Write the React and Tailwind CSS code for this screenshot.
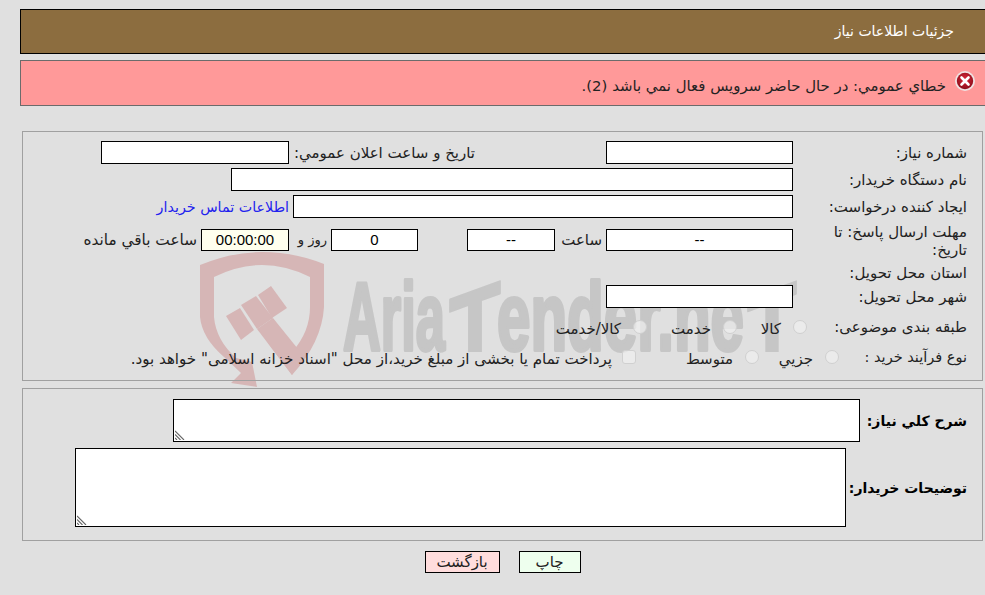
import React from "react";

const inputCls = "h-[23px] border border-black bg-white text-center text-[15px] font-['Liberation_Sans',sans-serif] text-black outline-none shrink-0";

function Label({ className = "", children }) {
  return <div className={"shrink-0 text-[15px] leading-[18px] text-[#222] " + className}>{children}</div>;
}

function Choice({ cell = "", type = "radio", gap = "mr-[12px]", textClass = "text-[15px]", children }) {
  return (
    <label className={"flex items-center shrink-0 " + cell}>
      <input
        type={type}
        disabled
        className={
          "appearance-none w-[14px] h-[14px] shrink-0 border border-[#d0d0d0] bg-[#f0f0f0]/70 " +
          (type === "radio" ? "rounded-full" : "rounded-[3px]")
        }
      />
      <span className={"mt-[3px] leading-[18px] text-[#222] whitespace-nowrap " + textClass + " " + gap}>{children}</span>
    </label>
  );
}

function Grip() {
  return (
    <svg className="absolute left-[2px] bottom-[2px] w-[10px] h-[10px]" viewBox="0 0 10 10" aria-hidden="true">
      <path d="M0 1 L9 10 M0 4.5 L5.5 10 M0 8 L2 10" stroke="#666" strokeWidth="1.1" fill="none" />
    </svg>
  );
}

function Note({ className }) {
  return (
    <div className="relative shrink-0">
      <textarea className={"block resize-none border border-black bg-white outline-none " + className} readOnly />
      <Grip />
    </div>
  );
}

function Watermark() {
  return (
    <svg
      className="absolute left-[190px] top-[240px] w-[620px] h-[155px] z-0"
      viewBox="190 240 620 155"
      dir="ltr"
      aria-hidden="true"
    >
      <defs>
        <clipPath id="base">
          <rect x="190" y="240" width="620" height="112" />
        </clipPath>
      </defs>
      <g fill="#d6b6b6">
        <path d="M200 265 Q232 252 262 252 Q294 252 324 264 L324 307 Q322 342 292 375 L268 343 L277 333 L292 352 Q310 332 310 307 L310 277 Q286 265 262 265 Q238 265 214 277 L214 317 Q216 340 236 358 L252 362 L257 387 L231 383 L241 373 L224 357 Q202 338 200 317 Z" />
        <path d="M226 316 L240 308 L254 330 L241 340 Z" />
        <path d="M241 305 L256 296 L273 318 L257 329 Z" />
        <path d="M258 295 L271 286 L287 308 L272 318 Z" />
        <path d="M257 329 L273 318 L302 354 L292 375 Z" />
      </g>
      <g fill="#c6c6c6" stroke="#c6c6c6" strokeWidth="4" strokeLinejoin="round" fontFamily="'Liberation Sans', sans-serif" fontWeight="700" fontSize="96" style={{ direction: "ltr" }}>
        <text x="343" y="350" textLength="102" lengthAdjust="spacingAndGlyphs">Aria</text>
        <text x="497" y="350" textLength="247" lengthAdjust="spacingAndGlyphs">ender.ne</text>
        <g clipPath="url(#base)" strokeWidth="2" fontSize="110">
          <text x="449" y="366" textLength="52" lengthAdjust="spacingAndGlyphs" transform="translate(475 282) skewY(-20) translate(-475 -282)">T</text>
          <text x="747" y="366" textLength="50" lengthAdjust="spacingAndGlyphs" transform="translate(772 282) skewY(-20) translate(-772 -282)">T</text>
        </g>
      </g>
    </svg>
  );
}

export default function App() {
  return (
    <div className="relative w-[985px] h-[595px] overflow-hidden bg-[#e0e0e0] pt-[9px] font-['DejaVu_Sans','Noto_Sans',sans-serif]" dir="rtl">
      <Watermark />
      <div className="relative z-10">
        <div className="ml-[20px] -mr-[2px] h-[45px] border border-black bg-[#8c6d3f] pr-[32px] flex items-center">
          <span className="text-[14px] text-white">جزئیات اطلاعات نیاز</span>
        </div>

        <div className="ml-[20px] -mr-[2px] mt-[6px] h-[46px] border border-[#6b6b6b] bg-[#ff9999] flex items-center pr-[10px]">
          <svg className="w-[22px] h-[22px] shrink-0 -mt-[5px]" viewBox="0 0 22 22" aria-hidden="true">
            <defs>
              <radialGradient id="er" cx="50%" cy="40%" r="60%">
                <stop offset="0%" stopColor="#e0283a" />
                <stop offset="100%" stopColor="#8a0f1c" />
              </radialGradient>
            </defs>
            <circle cx="11" cy="11" r="10" fill="#efe3e3" />
            <circle cx="11" cy="11" r="8.2" fill="url(#er)" />
            <path d="M7.5 7.5 L14.5 14.5 M14.5 7.5 L7.5 14.5" stroke="#fff" strokeWidth="2.6" strokeLinecap="round" />
          </svg>
          <span className="mr-[8px] mt-[6px] text-[14.9px] text-[#222] whitespace-nowrap">خطاي عمومي: در حال حاضر سرويس فعال نمي باشد (2).</span>
        </div>

        <fieldset className="ml-[22px] mr-[2px] mt-[25px] h-[250px] border border-[#a0a0a0] pr-[15px] pt-[9px]">
          <div className="flex items-center">
            <Label className="w-[174px]">شماره نیاز:</Label>
            <input className={inputCls + " w-[187px]"} readOnly />
            <Label className="w-[186px] mr-[131px]">تاریخ و ساعت اعلان عمومي:</Label>
            <input className={inputCls + " w-[188px]"} readOnly />
          </div>
          <div className="flex items-center mt-[4px]">
            <Label className="w-[174px]">نام دستگاه خریدار:</Label>
            <input className={inputCls + " w-[562px]"} readOnly />
          </div>
          <div className="flex items-center mt-[4px]">
            <Label className="w-[174px]">ایجاد کننده درخواست:</Label>
            <input className={inputCls + " w-[500px]"} readOnly />
            <a className="mr-[4px] text-[14.3px] leading-[18px] text-[#2222ee] whitespace-nowrap">اطلاعات تماس خریدار</a>
          </div>
          <div className="flex items-start mt-[11px] h-[36px]">
            <Label className="w-[174px] pl-[20px] -mt-[6px]">مهلت ارسال پاسخ: تا تاریخ:</Label>
            <input className={inputCls + " !h-[22px] w-[187px]"} readOnly value="--" />
            <Label className="w-[51px] pr-[4px] !leading-[22px]">ساعت</Label>
            <input className={inputCls + " !h-[22px] w-[88px]"} readOnly value="--" />
            <input className={inputCls + " !h-[22px] w-[87px] mr-[49px]"} readOnly value="0" />
            <Label className="w-[42px] pr-[4px] !leading-[22px] !text-[13px]">روز و</Label>
            <input className={inputCls + " !h-[22px] w-[88px] !bg-[#ffffee]"} readOnly value="00:00:00" />
            <Label className="mr-[4px] !leading-[22px] !text-[15.3px]">ساعت باقي مانده</Label>
          </div>
          <div className="flex items-center h-[16px]">
            <Label className="w-[174px]">استان محل تحویل:</Label>
          </div>
          <div className="flex items-center mt-[4px]">
            <Label className="w-[174px]">شهر محل تحویل:</Label>
            <input className={inputCls + " w-[187px]"} readOnly />
          </div>
          <div className="flex items-center mt-[10px] h-[18px]">
            <Label className="w-[160px]">طبقه بندی موضوعی:</Label>
            <Choice cell="w-[70px]">کالا</Choice>
            <Choice cell="w-[90px]">خدمت</Choice>
            <Choice>کالا/خدمت</Choice>
          </div>
          <div className="flex items-center mt-[12px] h-[18px]">
            <Label className="w-[128px] !text-[14.5px]">نوع فرآیند خرید :</Label>
            <Choice cell="w-[80px]">جزیي</Choice>
            <Choice cell="w-[123px]">متوسط</Choice>
            <Choice type="checkbox" gap="mr-[10px]" textClass="text-[15.1px]">پرداخت تمام یا بخشی از مبلغ خرید،از محل "اسناد خزانه اسلامی" خواهد بود.</Choice>
          </div>
        </fieldset>

        <fieldset className="ml-[22px] mr-[2px] mt-[7px] h-[153px] border border-[#a0a0a0] pr-[15px] pt-[10px]">
          <div className="flex items-center">
            <Label className="w-[107px] !text-[14px] font-bold !text-black">شرح کلي نياز:</Label>
            <Note className="w-[687px] h-[43px]" />
          </div>
          <div className="flex items-center mt-[6px]">
            <Label className="w-[121px] !text-[14px] font-bold !text-black">توضیحات خریدار:</Label>
            <Note className="w-[771px] h-[79px]" />
          </div>
        </fieldset>

        <div className="ml-[20px] mt-[10px] flex justify-center gap-[19px]">
          <button className="w-[62px] h-[22px] border border-black bg-[#eeffee] text-[15px] leading-[20px] text-[#222]">چاپ</button>
          <button className="w-[75px] h-[22px] border border-black bg-[#ffdddd] text-[15px] leading-[20px] text-[#222]">بازگشت</button>
        </div>
      </div>
    </div>
  );
}
